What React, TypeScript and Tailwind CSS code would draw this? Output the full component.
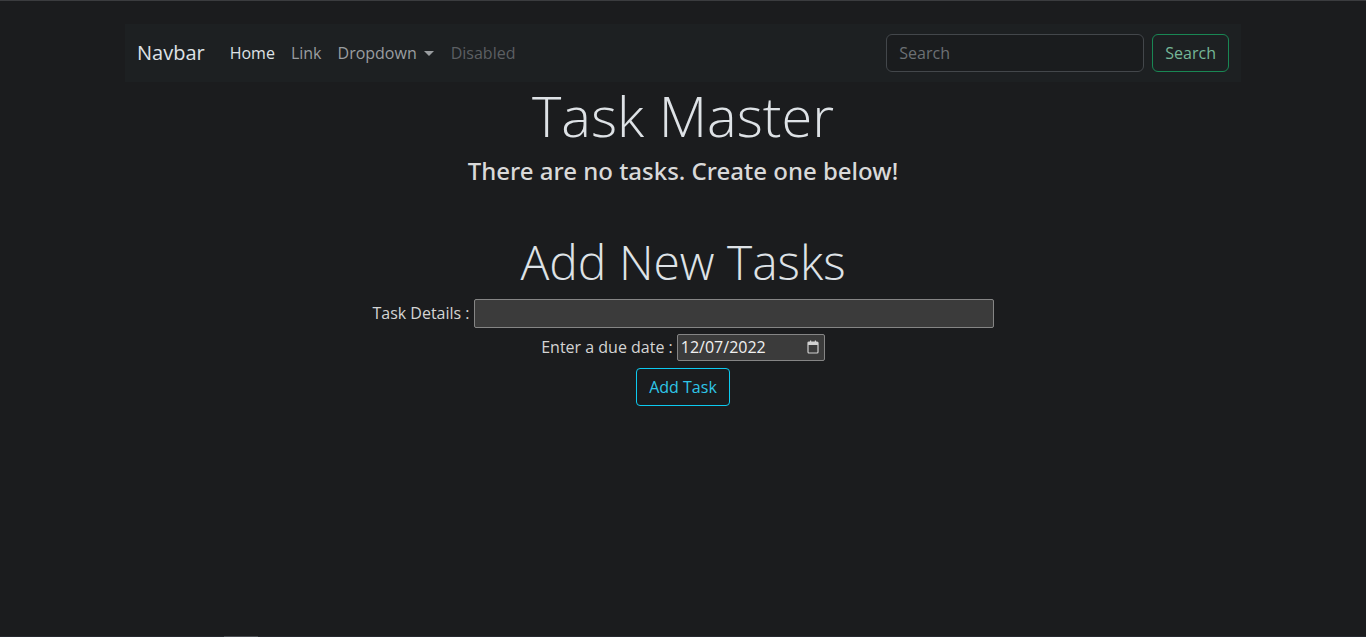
export default function App() {
  return (
    <div
      className="min-h-[637px] h-[637px] overflow-hidden bg-[#1b1c1e] text-[#dee2e6] border-t border-[#3b3c3f] relative"
      style={{ fontFamily: '"Open Sans", "Noto Sans", sans-serif' }}
    >
      <nav className="mx-auto mt-[23px] w-[1116px] h-[58px] bg-[#1d2022] flex items-center px-3">
        <a href="#" className="text-[20px] text-[#dee2e6] mr-[17px] leading-none">
          Navbar
        </a>
        <ul className="flex items-center text-[16px]">
          <li className="px-2 text-[#dee2e6]">Home</li>
          <li className="px-2 text-[#9a9da0]">Link</li>
          <li className="px-2 text-[#9a9da0] flex items-center">
            Dropdown
            <span className="ml-[7px] inline-block w-0 h-0 border-x-[5px] border-x-transparent border-t-[5px] border-t-[#9a9da0]" />
          </li>
          <li className="pl-[9px] pr-2 text-[#5c5f62]">Disabled</li>
        </ul>
        <form className="ml-auto flex items-center gap-2">
          <input
            type="search"
            placeholder="Search"
            className="w-[258px] h-[38px] rounded-[6px] border border-[#43474b] bg-[#1a1c1e] px-3 text-[16px] text-[#dee2e6] placeholder:text-[#6c7074] outline-none"
          />
          <button
            type="button"
            className="h-[38px] px-3 rounded-[6px] border border-[#198754] bg-transparent text-[16px] text-[#75b798]"
          >
            Search
          </button>
        </form>
      </nav>

      <h1 className="text-center text-[56px] font-light leading-[1.2] mb-2 text-[#dee2e6]">
        Task Master
      </h1>
      <h4
        className="text-center text-[24px] font-medium leading-[1.2] text-[#d9d9d9]"
        style={{ fontFamily: '"Noto Sans", "Open Sans", sans-serif' }}
      >
        There are no tasks. Create one below!
      </h4>

      <h2 className="text-center text-[48px] font-light leading-[1.2] mt-[47px] mb-2 text-[#dee2e6]">
        Add New Tasks
      </h2>

      <form className="flex flex-col items-center text-[16px] text-[#d4d4d4]">
        <div className="flex items-center gap-1">
          <label>Task Details :</label>
          <input
            type="text"
            className="w-[520px] h-[29px] bg-[#3b3b3b] border border-[#858585] rounded-[2px] px-1 outline-none"
          />
        </div>
        <div className="flex items-center gap-1 mt-[6px]">
          <label>Enter a due date :</label>
          <div className="w-[148px] h-[27px] bg-[#3b3b3b] border border-[#858585] rounded-[2px] pl-[3px] pr-[5px] flex items-center justify-between text-[#f0f0f0]">
            <span>12/07/2022</span>
            <svg width="12" height="14" viewBox="0 0 12 14">
              <rect x="1" y="2" width="10" height="11" rx="1" fill="none" stroke="#d0d0d0" strokeWidth="1.2" />
              <rect x="1" y="2" width="10" height="3" fill="#d0d0d0" />
              <rect x="3" y="0.5" width="1.2" height="2.5" fill="#d0d0d0" />
              <rect x="7.8" y="0.5" width="1.2" height="2.5" fill="#d0d0d0" />
            </svg>
          </div>
        </div>
        <button
          type="button"
          className="mt-[7px] h-[38px] px-3 rounded-[4px] border border-[#0dcaf0] text-[#2fc6e8] bg-transparent"
        >
          Add Task
        </button>
      </form>

      <div className="absolute bottom-0 left-0 right-0 h-px bg-[#25282e]">
        <div className="absolute left-[224px] w-[34px] h-px bg-[#4a4d53]" />
      </div>
    </div>
  );
}
